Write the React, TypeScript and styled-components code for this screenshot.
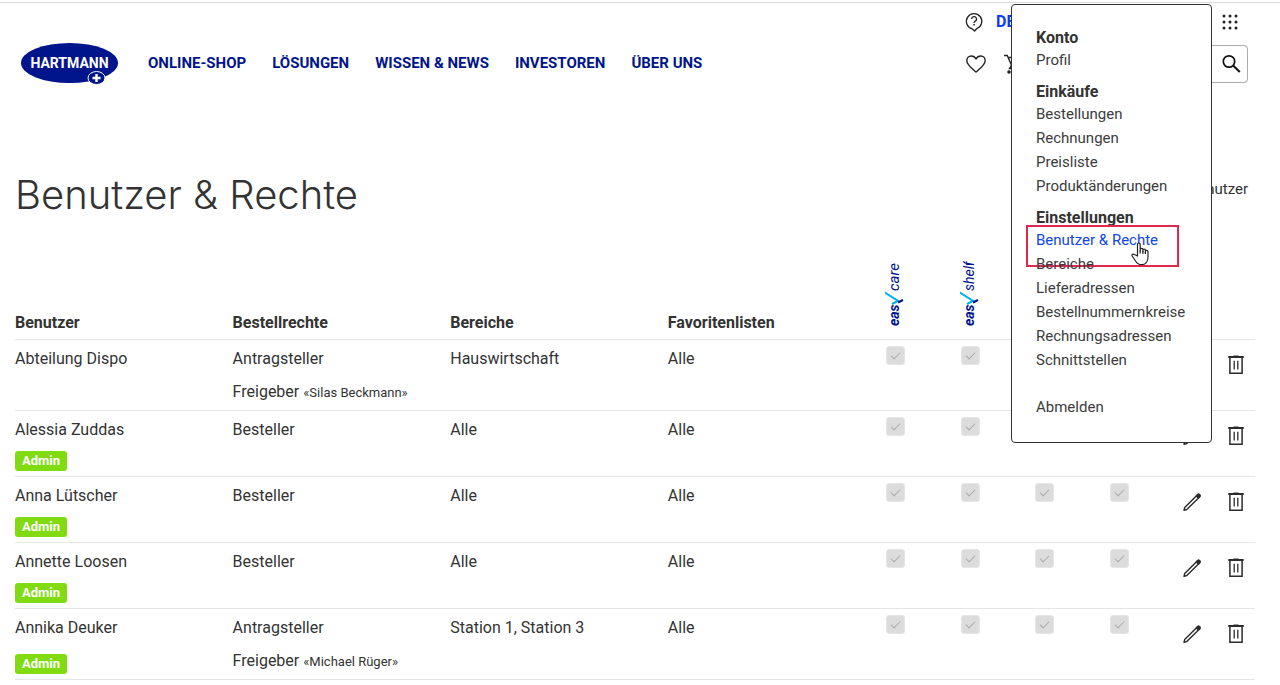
import React from "react";
import styled, { createGlobalStyle } from "styled-components";

const GlobalStyle = createGlobalStyle`
  *, *::before, *::after { box-sizing: border-box; }
  body {
    margin: 0;
    padding-top: 2px;
    background: #fff;
    color: #333;
    font: 16px/24px Roboto, "Liberation Sans", sans-serif;
  }
  ul { list-style: none; margin: 0; padding: 0; }
  a { color: inherit; text-decoration: none; }
`;

const Page = styled.div`
  position: relative;
  border-top: 1px solid #dcdcdc;
`;

const Header = styled.header`
  display: flex;
  align-items: flex-end;
  padding: 0 32px 0 20px;
`;

const LogoLink = styled.a`
  display: block;
  height: 44px;
  margin-right: 29px;
  svg { display: block; }
`;

const Nav = styled.nav`
  display: flex;
  gap: 26px;
  height: 44px;
  align-items: center;
`;

const NavLink = styled.a`
  color: #00148c;
  font-size: 15px;
  font-weight: 700;
  line-height: 24px;
`;

const Tools = styled.div`
  display: flex;
  flex-direction: column;
  gap: 4px;
  width: 284px;
  margin-left: auto;
  padding-bottom: 2px;
`;

const ToolRow = styled.div`
  display: flex;
  align-items: center;
  height: 38px;
`;

const IconButton = styled.button`
  display: flex;
  align-items: center;
  justify-content: center;
  padding: 0;
  border: 0;
  background: none;
  color: #222;
  cursor: pointer;
`;

const Language = styled.a`
  margin: 0 auto 0 12px;
  color: #0a3cf0;
  font-weight: 700;
`;

const HeaderIcon = styled(IconButton)<{ $gap: number }>`
  flex: none;
  width: 24px;
  margin-right: ${(p) => p.$gap}px;
`;

const Search = styled.form`
  display: flex;
  flex: 1;
  min-width: 0;
  height: 38px;
  margin-left: 48px;
  padding-right: 6px;
  border: 1px solid #aaa;
  border-radius: 4px;
`;

const SearchInput = styled.input`
  flex: 1;
  min-width: 0;
  border: 0;
  background: none;
  font: inherit;
`;

const Main = styled.main`
  padding: 86px 25px 0 15px;
`;

const TitleRow = styled.div`
  display: flex;
  justify-content: space-between;
  padding-right: 7px;
`;

const Title = styled.h1`
  margin: 0;
  font-family: Inter, Roboto, sans-serif;
  font-size: 40px;
  font-weight: 300;
  line-height: 48px;
`;

const AddUser = styled.button`
  height: 36px;
  padding: 0;
  border: 0;
  background: none;
  color: #333;
  font: inherit;
  font-size: 15px;
`;

const Table = styled.table`
  width: 100%;
  margin-top: 35px;
  border-collapse: separate;
  border-spacing: 0;
  table-layout: fixed;
`;

const HeadCell = styled.th<{ $width?: string; $logo?: boolean }>`
  width: ${(p) => p.$width ?? "auto"};
  height: 86px;
  padding: 0 0 ${(p) => (p.$logo ? 12 : 4)}px;
  border-bottom: 1px solid #e6e6e6;
  vertical-align: bottom;
  text-align: left;
  font-weight: 700;
  svg { display: block; }
`;

const Row = styled.tr<{ $tall: boolean }>`
  height: ${(p) => (p.$tall ? 71 : 66)}px;
`;

const Cell = styled.td<{ $top?: number }>`
  padding: ${(p) => p.$top ?? 7}px 0 5px;
  border-bottom: 1px solid #e6e6e6;
  vertical-align: top;
`;

const Approver = styled.div`
  margin-top: 9px;
  small { font-size: 13px; }
`;

const Badge = styled.div<{ $tall: boolean }>`
  width: fit-content;
  margin-top: ${(p) => (p.$tall ? 14 : 9)}px;
  padding: 0 7px;
  border-radius: 3px;
  background: #80dc10;
  color: #fff;
  font-size: 13px;
  font-weight: 700;
  line-height: 20px;
`;

const Check = styled.input`
  appearance: none;
  display: flex;
  align-items: center;
  justify-content: center;
  width: 19px;
  height: 19px;
  margin: 0 1px;
  border: 1px solid #e6e6e6;
  border-radius: 3px;
  background: #dcdcdc;
  &::after {
    content: "";
    width: 9px;
    height: 5px;
    margin-bottom: 2px;
    border: solid #aaa;
    border-width: 0 0 1px 1px;
    transform: rotate(-45deg);
  }
`;

const Actions = styled.div`
  display: flex;
  gap: 26px;
`;

const Menu = styled.nav`
  position: absolute;
  top: 1px;
  right: 68px;
  width: 201px;
  padding: 23px 0 23px 24px;
  border: 1px solid #333;
  border-radius: 4px;
  background: #fff;
`;

const MenuGroup = styled.section`
  margin-bottom: 10px;
`;

const MenuHeading = styled.h2`
  margin: 0;
  font-size: 16px;
  line-height: 20px;
`;

const MenuItem = styled.li`
  position: relative;
  font-size: 15px;
  line-height: 24px;
`;

const MenuLink = styled.a<{ $active?: boolean }>`
  color: ${(p) => (p.$active ? "#0f46e6" : "#3c3c3c")};
`;

const SignOut = styled.ul`
  margin-top: 23px;
`;

const Highlight = styled.span`
  position: absolute;
  top: -3px;
  left: -10px;
  width: 153px;
  height: 42px;
  border: 2px solid #de2850;
`;

const Pointer = styled.svg`
  position: absolute;
  top: 14px;
  left: 95px;
  z-index: 1;
`;

const HartmannLogo = () => (
  <svg width="99" height="44" viewBox="0 0 99 44" role="img" aria-label="HARTMANN">
    <ellipse cx="49.5" cy="22" rx="48.5" ry="20" fill="#00148c" />
    <text x="49.5" y="27" textAnchor="middle" fill="#fff" fontFamily="Roboto, sans-serif" fontSize="14" fontWeight="700">HARTMANN</text>
    <ellipse cx="76.500" cy="37" rx="8.500" ry="6.500" fill="#00148c" stroke="#fff" strokeWidth="1" />
    <path d="M76.500 33v8M72.500 37h8" stroke="#fff" strokeWidth="2.400" />
  </svg>
);

const HelpIcon = () => (
  <svg width="20" height="22" viewBox="0 0 20 22" fill="none" stroke="currentColor" strokeWidth="1.300">
    <path d="M8 17.700A7.700 7.700 0 1 1 12.800 17.500L10.600 20Z" strokeLinejoin="round" />
    <path d="M7.700 8.100a2.400 2.400 0 1 1 3.500 2.100c-.8.400-1.100.8-1.100 1.800" />
    <path d="M10.100 13v1.500" strokeWidth="1.500" />
  </svg>
);

const DotsIcon = () => (
  <svg width="18" height="18" viewBox="0 0 18 18" fill="currentColor">
    {[3, 9, 15].map((y) => [3, 9, 15].map((x) => <circle key={`${x}-${y}`} cx={x} cy={y} r="1.500" />))}
  </svg>
);

const HeartIcon = () => (
  <svg width="20" height="18" viewBox="0 0 20 18" fill="none" stroke="currentColor" strokeWidth="1.400" strokeLinejoin="round">
    <path d="M10 17C5.500 13.200.8 9.700.8 5.700.8 3 2.800 1 5.300 1 7.300 1 9 2 10 4c1-2 2.700-3 4.700-3 2.500 0 4.500 2 4.500 4.700 0 4-4.700 7.500-9.200 11.300Z" />
  </svg>
);

const CartIcon = () => (
  <svg width="20" height="20" viewBox="0 0 20 20" fill="none" stroke="currentColor" strokeWidth="1.400">
    <path d="M0 1.500h3.200l4.300 9.500h7.500l4-7.500H4.200M7.500 11l-2 3.500h12" />
    <circle cx="5" cy="18" r="1.800" fill="currentColor" stroke="none" />
    <circle cx="15" cy="18" r="1.800" fill="currentColor" stroke="none" />
  </svg>
);

const SearchIcon = () => (
  <svg width="20" height="20" viewBox="0 0 20 20" fill="none" stroke="#111" strokeWidth="1.700">
    <circle cx="8" cy="7.500" r="5.700" />
    <path d="m12.100 11.500 6.700 6.500" strokeWidth="2" />
  </svg>
);

const PencilIcon = () => (
  <svg width="18" height="20" viewBox="0 0 18 20" fill="none" stroke="#2b2b2b" strokeWidth="1.400" strokeLinejoin="round">
    <path d="M1 18.300l.7-2.800L14.300 2.900c.7-.7 1.700-.7 2.300-.1.600.6.600 1.500-.1 2.200L3.800 17.500Z" />
    <path d="M13.300 3.900l1-1c.7-.7 1.700-.7 2.300-.1.600.6.600 1.500-.1 2.200l-1 1Z" fill="#2b2b2b" />
  </svg>
);

const TrashIcon = () => (
  <svg width="18" height="20" viewBox="0 0 18 20" fill="none" stroke="#2b2b2b">
    <path d="M1.300 2h15.400" strokeWidth="2" />
    <path d="M6.500 1h5" strokeWidth="1" />
    <path d="M2.900 2.500v15.800h12.200V2.500" strokeWidth="1.500" />
    <path d="M7.200 5.800v8.700M10.800 5.800v8.700" strokeWidth="1.300" />
  </svg>
);

const EasyLogo = ({ name }: { name: string }) => (
  <svg width="22" height="66" viewBox="0 0 22 66" role="img" aria-label={`easy ${name}`}>
    <g transform="translate(14 65) rotate(-90)" fontFamily="Roboto, sans-serif" fontStyle="italic" fill="#00148c">
      <text x="0" y="0" fontSize="14" fontWeight="700">eas</text>
      <text x="35" y="0" fontSize={name.length > 4 ? 14 : 15} fontWeight="400">{name}</text>
      <g fill="none" strokeWidth="2">
        <path d="M22 -7l3 6L34 -15" stroke="#00aff0" />
        <path d="M23.500 -1l2.500 5" stroke="#00148c" />
      </g>
    </g>
  </svg>
);

const PointerIcon = () => (
  <Pointer width="20" height="24" viewBox="0 0 20 24" fill="#fff" stroke="#222" strokeWidth="1.200" strokeLinejoin="round" aria-hidden="true">
    <path d="M6.500 14V2.500c0-2 2.700-2 2.700 0V9V7.500c0-1.600 2.700-1.600 2.700 0V9.500V8.300c0-1.500 2.500-1.500 2.500 0V10.500V9.500c0-1.500 2.600-1.400 2.600.2V15c0 4.500-2.500 7.700-6.500 7.700-3 0-4.500-1.300-6-3.700L1.200 14c-.8-1.500.9-2.600 2.200-1.500Z" />
    <path d="M9.200 8.500v3M11.900 9v3M14.400 10v2" fill="none" />
  </Pointer>
);

type User = {
  name: string;
  right: string;
  approver?: string;
  areas: string;
  admin: boolean;
};

const users: User[] = [
  { name: "Abteilung Dispo", right: "Antragsteller", approver: "Silas Beckmann", areas: "Hauswirtschaft", admin: false },
  { name: "Alessia Zuddas", right: "Besteller", areas: "Alle", admin: true },
  { name: "Anna Lütscher", right: "Besteller", areas: "Alle", admin: true },
  { name: "Annette Loosen", right: "Besteller", areas: "Alle", admin: true },
  { name: "Annika Deuker", right: "Antragsteller", approver: "Michael Rüger", areas: "Station 1, Station 3", admin: true },
];

const menu = [
  { title: "Konto", items: ["Profil"] },
  { title: "Einkäufe", items: ["Bestellungen", "Rechnungen", "Preisliste", "Produktänderungen"] },
  {
    title: "Einstellungen",
    items: ["Benutzer & Rechte", "Bereiche", "Lieferadressen", "Bestellnummernkreise", "Rechnungsadressen", "Schnittstellen"],
  },
];

const navItems = ["ONLINE-SHOP", "LÖSUNGEN", "WISSEN & NEWS", "INVESTOREN", "ÜBER UNS"];
const textColumns = ["Benutzer", "Bestellrechte", "Bereiche", "Favoritenlisten"];
const services = ["care", "shelf", "", ""];

export default function App() {
  return (
    <>
      <GlobalStyle />
      <Page>
        <Header>
          <LogoLink href="#"><HartmannLogo /></LogoLink>
          <Nav>
            {navItems.map((label) => <NavLink key={label} href="#">{label}</NavLink>)}
          </Nav>
          <Tools>
            <ToolRow>
              <IconButton aria-label="Hilfe"><HelpIcon /></IconButton>
              <Language href="#">DE</Language>
              <HeaderIcon $gap={6} aria-label="Anwendungen"><DotsIcon /></HeaderIcon>
            </ToolRow>
            <ToolRow>
              <HeaderIcon $gap={14} aria-label="Favoriten"><HeartIcon /></HeaderIcon>
              <HeaderIcon $gap={14} aria-label="Warenkorb"><CartIcon /></HeaderIcon>
              <Search>
                <SearchInput aria-label="Suche" />
                <IconButton type="submit" aria-label="Suchen"><SearchIcon /></IconButton>
              </Search>
            </ToolRow>
          </Tools>
        </Header>

        <Main>
          <TitleRow>
            <Title>Benutzer &amp; Rechte</Title>
            <AddUser>Benutzer</AddUser>
          </TitleRow>
          <Table>
            <thead>
              <tr>
                {textColumns.map((label) => <HeadCell key={label} $width="17.55%">{label}</HeadCell>)}
                {services.map((name, i) => (
                  <HeadCell key={i} $width="6%" $logo>{name && <EasyLogo name={name} />}</HeadCell>
                ))}
                <HeadCell />
              </tr>
            </thead>
            <tbody>
              {users.map((user) => (
                <Row key={user.name} $tall={!!user.approver}>
                  <Cell>
                    {user.name}
                    {user.admin && <Badge $tall={!!user.approver}>Admin</Badge>}
                  </Cell>
                  <Cell>
                    {user.right}
                    {user.approver && <Approver>Freigeber <small>«{user.approver}»</small></Approver>}
                  </Cell>
                  <Cell>{user.areas}</Cell>
                  <Cell>Alle</Cell>
                  {services.map((_, i) => (
                    <Cell key={i} $top={6}>
                      <Check type="checkbox" checked disabled readOnly aria-label={`${user.name}: Dienst ${i + 1}`} />
                    </Cell>
                  ))}
                  <Cell $top={15}>
                    <Actions>
                      <IconButton aria-label="Bearbeiten"><PencilIcon /></IconButton>
                      <IconButton aria-label="Löschen"><TrashIcon /></IconButton>
                    </Actions>
                  </Cell>
                </Row>
              ))}
            </tbody>
          </Table>
        </Main>

        <Menu aria-label="Konto">
          {menu.map((group) => (
            <MenuGroup key={group.title}>
              <MenuHeading>{group.title}</MenuHeading>
              <ul>
                {group.items.map((item) => {
                  const active = item === "Benutzer & Rechte";
                  return (
                    <MenuItem key={item}>
                      <MenuLink href="#" $active={active}>{item}</MenuLink>
                      {active && <><Highlight /><PointerIcon /></>}
                    </MenuItem>
                  );
                })}
              </ul>
            </MenuGroup>
          ))}
          <SignOut>
            <MenuItem><MenuLink href="#">Abmelden</MenuLink></MenuItem>
          </SignOut>
        </Menu>
      </Page>
    </>
  );
}
